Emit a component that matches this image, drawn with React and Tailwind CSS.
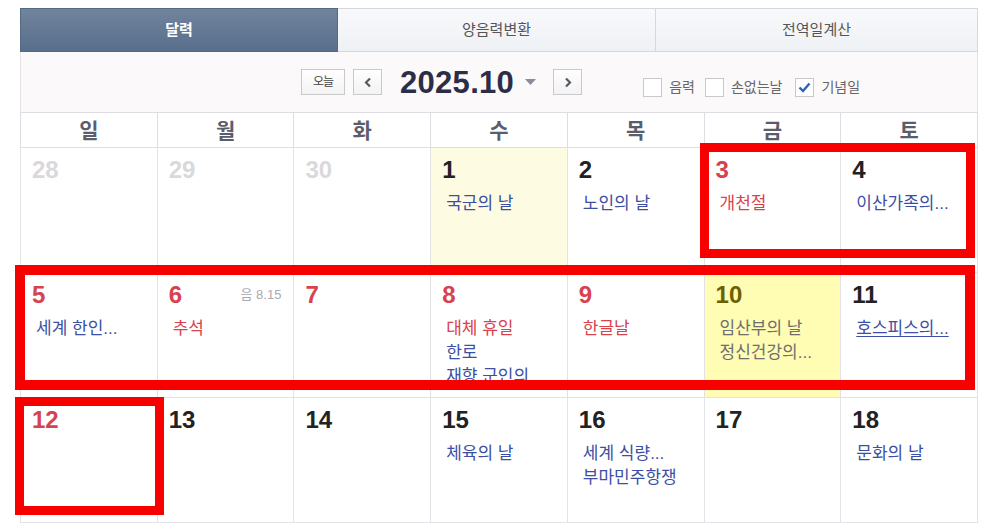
import React from "react";

const BLUE = "text-[#3d4fa2]";
const RED = "text-[#d8424e]";

const rows = [
  [
    { d: 28, c: "gray" },
    { d: 29, c: "gray" },
    { d: 30, c: "gray" },
    { d: 1, c: "black", bg: "bg-[#fdfbe2]", ev: [["국군의 날", "blue"]] },
    { d: 2, c: "black", ev: [["노인의 날", "blue"]] },
    { d: 3, c: "red", ev: [["개천절", "red"]] },
    { d: 4, c: "black", ev: [["이산가족의...", "blue"]] },
  ],
  [
    { d: 5, c: "red", ev: [["세계 한인...", "blue"]] },
    { d: 6, c: "red", lunar: "음 8.15", ev: [["추석", "red"]] },
    { d: 7, c: "red" },
    { d: 8, c: "red", ev: [["대체 휴일", "red"], ["한로", "blue"], ["재향 군인의...", "blue"]] },
    { d: 9, c: "red", ev: [["한글날", "red"]] },
    { d: 10, c: "olive", bg: "bg-[#fffcb4]", ev: [["임산부의 날", "gray"], ["정신건강의...", "gray"]] },
    { d: 11, c: "black", ev: [["호스피스의...", "blueu"]] },
  ],
  [
    { d: 12, c: "red" },
    { d: 13, c: "black" },
    { d: 14, c: "black" },
    { d: 15, c: "black", ev: [["체육의 날", "blue"]] },
    { d: 16, c: "black", ev: [["세계 식량...", "blue"], ["부마민주항쟁", "blue"]] },
    { d: 17, c: "black" },
    { d: 18, c: "black", ev: [["문화의 날", "blue"]] },
  ],
];

const numColor = {
  gray: "text-[#d9d9dc]",
  black: "text-[#222222]",
  red: "text-[#d8424e]",
  olive: "text-[#6c6100]",
};

const evColor = {
  blue: BLUE,
  blueu: BLUE + " underline underline-offset-2",
  red: RED,
  gray: "text-[#6f6f6f]",
};

function Chevron({ dir }) {
  return (
    <svg width="8" height="11" viewBox="0 0 8 11">
      <polyline
        points={dir === "left" ? "6,1.5 2,5.5 6,9.5" : "2,1.5 6,5.5 2,9.5"}
        fill="none"
        stroke="#555a66"
        strokeWidth="2.2"
      />
    </svg>
  );
}

function Check({ checked, label, ml }) {
  return (
    <div className={"flex items-center " + ml}>
      <div className="w-[19px] h-[19px] border border-[#c9c9cc] bg-white flex items-center justify-center">
        {checked && (
          <svg width="13" height="11" viewBox="0 0 13 11">
            <polyline points="1.5,5.5 5,9 11.5,1.5" fill="none" stroke="#2f62b8" strokeWidth="2.4" />
          </svg>
        )}
      </div>
      <span className="ml-[7px] text-[14px] text-[#666] leading-none">{label}</span>
    </div>
  );
}

export default function App() {
  return (
    <div
      className="relative w-[1000px] h-[525px] bg-white overflow-hidden"
      style={{ fontFamily: "'Liberation Sans', 'Noto Sans CJK KR', sans-serif" }}
    >
      <div className="ml-[20px] pt-[8px] w-[958px]">
        {/* Tabs */}
        <div className="flex h-[44px]">
          <div className="w-[318px] flex items-center justify-center bg-linear-to-b from-[#71849e] to-[#586e8a] border border-[#556980] text-white text-[15px] font-bold">
            달력
          </div>
          <div className="w-[318px] flex items-center justify-center bg-linear-to-b from-[#f8f9fb] to-[#eef1f5] border-y border-r border-[#d3d7de] text-[#555] text-[15px]">
            양음력변환
          </div>
          <div className="flex-1 flex items-center justify-center bg-linear-to-b from-[#f8f9fb] to-[#eef1f5] border-y border-r border-[#d3d7de] text-[#555] text-[15px]">
            전역일계산
          </div>
        </div>

        {/* Toolbar */}
        <div className="h-[60px] bg-[#fcf9fa] border-x border-[#e6e4e8] flex items-center pl-[280px]">
          <div className="w-[44px] h-[26px] border border-[#c9c9cc] bg-linear-to-b from-white to-[#f3f3f3] flex items-center justify-center text-[12px] text-[#444] tracking-[-1px]">
            오늘
          </div>
          <div className="ml-[8px] w-[29px] h-[26px] border border-[#c9c9cc] bg-linear-to-b from-white to-[#f3f3f3] flex items-center justify-center">
            <Chevron dir="left" />
          </div>
          <div className="ml-[18px] text-[31px] font-bold text-[#2b2e47] leading-none tracking-[0.3px]">2025.10</div>
          <svg className="ml-[10px]" width="13" height="8" viewBox="0 0 13 8">
            <polygon points="1,1 12,1 6.5,7" fill="#8a8d96" />
          </svg>
          <div className="ml-[16px] w-[29px] h-[26px] border border-[#c9c9cc] bg-linear-to-b from-white to-[#f3f3f3] flex items-center justify-center">
            <Chevron dir="right" />
          </div>
          <div className="flex items-center ml-[61px] pt-[10px]">
            <Check label="음력" ml="" />
            <Check label="손없는날" ml="ml-[10px]" />
            <Check label="기념일" checked ml="ml-[13px]" />
          </div>
        </div>

        {/* Weekday header */}
        <div className="grid grid-cols-7 h-[36px] border-t border-b border-[#dedde3] border-l">
          {["일", "월", "화", "수", "목", "금", "토"].map((w) => (
            <div
              key={w}
              className="border-r border-[#dedde3] flex items-center justify-center pt-[2px] text-[21px] font-bold text-[#5b5d6d]"
            >
              {w}
            </div>
          ))}
        </div>

        {/* Rows */}
        {rows.map((row, ri) => (
          <div key={ri} className="grid grid-cols-7 h-[125px] border-l border-b border-[#e2e2e8]">
            {row.map((cell, ci) => (
              <div key={ci} className={"border-r border-[#e2e2e8] " + (cell.bg || "bg-white")}>
                <div className="flex items-center justify-between pl-[11px] pr-[12px] pt-[9px] h-[35px]">
                  <span className={"text-[24px] font-bold leading-[26px] " + numColor[cell.c]}>{cell.d}</span>
                  {cell.lunar && <span className="text-[13px] text-[#a9a9ad]">{cell.lunar}</span>}
                </div>
                <div className="pl-[15px] pt-[9px]">
                  {(cell.ev || []).map(([t, k], i) => (
                    <div key={i} className={"text-[17px] leading-[24px] whitespace-nowrap " + evColor[k]}>
                      {t}
                    </div>
                  ))}
                </div>
              </div>
            ))}
          </div>
        ))}
      </div>

      {/* Annotation overlays */}
      <div className="absolute left-[700px] top-[143px] w-[275px] h-[115px] border-[9px] border-[#f70000]" />
      <div className="absolute left-[15px] top-[265px] w-[960px] h-[125px] border-[10px] border-[#f70000]" />
      <div className="absolute left-[15px] top-[397px] w-[149px] h-[118px] border-[9px] border-[#f70000]" />
    </div>
  );
}
